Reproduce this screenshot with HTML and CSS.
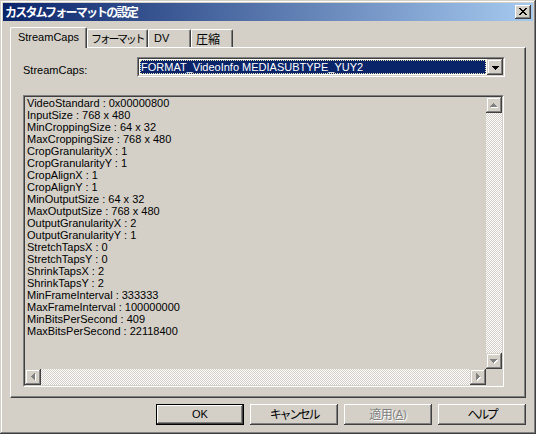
FILE: index.html
```html
<!DOCTYPE html>
<html lang="ja">
<head>
<meta charset="utf-8">
<title>カスタムフォーマットの設定</title>
<link rel="stylesheet" href="styles.css">
</head>
<body>
<div class="window">
  <div class="titlebar">
    <span class="title">カスタムフォーマットの設定</span>
    <div class="close">
      <svg width="8" height="7" viewBox="0 0 8 7" shape-rendering="crispEdges">
        <rect x="0" y="0" width="2" height="1"/><rect x="6" y="0" width="2" height="1"/>
        <rect x="1" y="1" width="2" height="1"/><rect x="5" y="1" width="2" height="1"/>
        <rect x="2" y="2" width="4" height="1"/>
        <rect x="3" y="3" width="2" height="1"/>
        <rect x="2" y="4" width="4" height="1"/>
        <rect x="1" y="5" width="2" height="1"/><rect x="5" y="5" width="2" height="1"/>
        <rect x="0" y="6" width="2" height="1"/><rect x="6" y="6" width="2" height="1"/>
      </svg>
    </div>
  </div>
  <div class="content">
    <div class="tabs">
      <div class="tab active">StreamCaps</div>
      <div class="tab tab-format">フォーマット</div>
      <div class="tab tab-dv">DV</div>
      <div class="tab tab-comp kanji">圧縮</div>
    </div>
    <div class="panel">
      <div class="row">
        <span class="label">StreamCaps:</span>
        <div class="combo">
          <div class="combo-inner">
            <div class="combo-value"><span class="combo-sel">FORMAT_VideoInfo MEDIASUBTYPE_YUY2</span></div>
            <div class="sbtn combo-btn">
              <svg width="7" height="4" viewBox="0 0 7 4" shape-rendering="crispEdges">
                <rect x="0" y="0" width="7" height="1"/><rect x="1" y="1" width="5" height="1"/>
                <rect x="2" y="2" width="3" height="1"/><rect x="3" y="3" width="1" height="1"/>
              </svg>
            </div>
          </div>
        </div>
      </div>
      <div class="listbox">
        <div class="listbox-inner">
          <div class="list-text">VideoStandard : 0x00000800
InputSize : 768 x 480
MinCroppingSize : 64 x 32
MaxCroppingSize : 768 x 480
CropGranularityX : 1
CropGranularityY : 1
CropAlignX : 1
CropAlignY : 1
MinOutputSize : 64 x 32
MaxOutputSize : 768 x 480
OutputGranularityX : 2
OutputGranularityY : 1
StretchTapsX : 0
StretchTapsY : 0
ShrinkTapsX : 2
ShrinkTapsY : 2
MinFrameInterval : 333333
MaxFrameInterval : 100000000
MinBitsPerSecond : 409
MaxBitsPerSecond : 22118400</div>
          <div class="vscroll">
            <div class="sbtn">
              <svg width="8" height="5" viewBox="0 0 8 5" shape-rendering="crispEdges">
                <g fill="#fff"><rect x="4" y="1" width="1" height="1"/><rect x="3" y="2" width="3" height="1"/><rect x="2" y="3" width="5" height="1"/><rect x="1" y="4" width="7" height="1"/></g>
                <g fill="#808080"><rect x="3" y="0" width="1" height="1"/><rect x="2" y="1" width="3" height="1"/><rect x="1" y="2" width="5" height="1"/><rect x="0" y="3" width="7" height="1"/></g>
              </svg>
            </div>
            <div class="track"></div>
            <div class="sbtn">
              <svg width="8" height="5" viewBox="0 0 8 5" shape-rendering="crispEdges">
                <g fill="#fff"><rect x="1" y="1" width="7" height="1"/><rect x="2" y="2" width="5" height="1"/><rect x="3" y="3" width="3" height="1"/><rect x="4" y="4" width="1" height="1"/></g>
                <g fill="#808080"><rect x="0" y="0" width="7" height="1"/><rect x="1" y="1" width="5" height="1"/><rect x="2" y="2" width="3" height="1"/><rect x="3" y="3" width="1" height="1"/></g>
              </svg>
            </div>
          </div>
          <div class="hscroll">
            <div class="sbtn">
              <svg width="5" height="8" viewBox="0 0 5 8" shape-rendering="crispEdges">
                <g fill="#fff"><rect x="1" y="4" width="1" height="1"/><rect x="2" y="3" width="1" height="3"/><rect x="3" y="2" width="1" height="5"/><rect x="4" y="1" width="1" height="7"/></g>
                <g fill="#808080"><rect x="0" y="3" width="1" height="1"/><rect x="1" y="2" width="1" height="3"/><rect x="2" y="1" width="1" height="5"/><rect x="3" y="0" width="1" height="7"/></g>
              </svg>
            </div>
            <div class="track"></div>
            <div class="sbtn">
              <svg width="5" height="8" viewBox="0 0 5 8" shape-rendering="crispEdges">
                <g fill="#fff"><rect x="1" y="1" width="1" height="7"/><rect x="2" y="2" width="1" height="5"/><rect x="3" y="3" width="1" height="3"/><rect x="4" y="4" width="1" height="1"/></g>
                <g fill="#808080"><rect x="0" y="0" width="1" height="7"/><rect x="1" y="1" width="1" height="5"/><rect x="2" y="2" width="1" height="3"/><rect x="3" y="3" width="1" height="1"/></g>
              </svg>
            </div>
          </div>
          <div class="corner"></div>
        </div>
      </div>
    </div>
    <div class="buttons">
      <div class="btn default">OK</div>
      <div class="btn jp">キャンセル</div>
      <div class="btn disabled"><span class="kanji">適用</span>(<u>A</u>)</div>
      <div class="btn jp">ヘルプ</div>
    </div>
  </div>
</div>
</body>
</html>
```

FILE: styles.css
```css
html, body {
  margin: 0;
  padding: 0;
  background: #d4d0c8;
}

body {
  font-family: "Liberation Sans", "Noto Sans CJK JP", sans-serif;
  font-size: 11px;
  color: #000;
}

.window {
  width: 536px;
  height: 434px;
  box-sizing: border-box;
  padding: 3px;
  background: #d4d0c8;
  box-shadow: inset -1px -1px #404040, inset 1px 1px #d4d0c8,
              inset -2px -2px #808080, inset 2px 2px #ffffff;
  display: flex;
  flex-direction: column;
}

/* title bar */
.titlebar {
  height: 18px;
  flex: none;
  background: linear-gradient(to right, #0a246a, #a6caf0);
  display: flex;
  align-items: center;
  justify-content: space-between;
  padding: 0 2px 0 2px;
}

.title {
  color: #fff;
  font-family: "Noto Sans CJK JP", sans-serif;
  font-weight: bold;
  font-size: 12px;
  letter-spacing: -1.8px;
  line-height: 18px;
}

.close {
  width: 16px;
  height: 14px;
  box-sizing: border-box;
  background: #d4d0c8;
  box-shadow: inset -1px -1px #404040, inset 1px 1px #ffffff,
              inset -2px -2px #808080, inset 2px 2px #d4d0c8;
  display: flex;
  align-items: flex-start;
  justify-content: flex-start;
  padding: 3px 0 0 4px;
}

.close svg {
  display: block;
  fill: #000;
}

/* content */
.content {
  padding: 6px 7px 0 7px;
  display: flex;
  flex-direction: column;
}

.tabs {
  display: flex;
  align-items: flex-end;
  height: 21px;
  margin-bottom: -1px;
  position: relative;
  z-index: 1;
}

.tab {
  box-sizing: border-box;
  height: 18px;
  margin-bottom: 1px;
  border-top: 1px solid #fff;
  border-left: 1px solid #fff;
  border-right: 1px solid #404040;
  border-radius: 2px 2px 0 0;
  box-shadow: inset -1px 0 #808080;
  background: #d4d0c8;
  text-align: center;
  line-height: 16px;
  white-space: nowrap;
  overflow: hidden;
}

.tab.active {
  width: 77px;
  height: 21px;
  margin-bottom: 0;
  line-height: 18px;
}

.tab-format {
  width: 61px;
  font-family: "Noto Sans CJK JP", sans-serif;
  font-size: 11px;
  letter-spacing: -2.3px;
  text-align: left;
  padding-left: 3px;
  line-height: 17px;
}

.tab-dv { width: 43px; text-align: left; padding-left: 5px; }
.tab-comp { width: 42px; text-align: left; padding-left: 4px; line-height: 17px; }

.jp {
  font-family: "Noto Sans CJK JP", sans-serif;
  font-size: 12px;
  letter-spacing: -2.3px;
}

.kanji {
  font-family: "Noto Sans CJK JP", sans-serif;
  font-size: 12px;
  letter-spacing: 0;
}

.panel {
  height: 351px;
  box-sizing: border-box;
  border-top: 1px solid #fff;
  border-left: 1px solid #fff;
  border-right: 1px solid #404040;
  border-bottom: 1px solid #404040;
  box-shadow: inset -1px -1px #808080;
  padding: 9px 0 0 12px;
}

.row {
  display: flex;
  align-items: center;
  height: 20px;
}

.label {
  width: 114px;
  flex: none;
  padding-top: 5px;
}

/* combo */
.combo {
  width: 368px;
  height: 20px;
  box-sizing: border-box;
  border: 1px solid;
  border-color: #808080 #fff #fff #808080;
}

.combo-inner {
  height: 100%;
  box-sizing: border-box;
  border: 1px solid;
  border-color: #404040 #d4d0c8 #d4d0c8 #404040;
  background: #fff;
  display: flex;
}

.combo-value {
  flex: 1;
  padding: 1px;
  display: flex;
}

.combo-sel {
  flex: 1;
  background: #0a246a;
  color: #fff;
  line-height: 14px;
  padding-left: 1px;
  outline: 1px dotted #f0e9b4;
  outline-offset: -1px;
  white-space: nowrap;
  overflow: hidden;
}

.sbtn {
  width: 16px;
  height: 16px;
  flex: none;
  box-sizing: border-box;
  background: #d4d0c8;
  box-shadow: inset -1px -1px #404040, inset 1px 1px #d4d0c8,
              inset -2px -2px #808080, inset 2px 2px #ffffff;
  display: flex;
  align-items: center;
  justify-content: center;
}

.sbtn svg { display: block; }

.combo-btn svg { fill: #000; margin-top: 1px; }

/* listbox */
.listbox {
  margin-top: 18px;
  width: 481px;
  height: 292px;
  box-sizing: border-box;
  border: 1px solid;
  border-color: #808080 #fff #fff #808080;
}

.listbox-inner {
  height: 100%;
  box-sizing: border-box;
  border: 1px solid;
  border-color: #404040 #d4d0c8 #d4d0c8 #404040;
  display: grid;
  grid-template-columns: 1fr 16px;
  grid-template-rows: 1fr 16px;
  background: #d4d0c8;
}

.list-text {
  white-space: pre;
  line-height: 12px;
  padding: 0 0 0 2px;
  overflow: hidden;
}

.vscroll {
  display: flex;
  flex-direction: column;
}

.hscroll {
  display: flex;
}

.track {
  flex: 1;
  background: repeating-conic-gradient(#ffffff 0 25%, #d4d0c8 0 50%) 0 0 / 2px 2px;
}

.corner { background: #d4d0c8; }

/* buttons */
.buttons {
  display: flex;
  justify-content: flex-end;
  gap: 6px;
  margin-top: 6px;
}

.btn {
  width: 88px;
  height: 21px;
  box-sizing: border-box;
  background: #d4d0c8;
  box-shadow: inset -1px -1px #404040, inset 1px 1px #ffffff,
              inset -2px -2px #808080, inset 2px 2px #d4d0c8;
  display: flex;
  align-items: center;
  justify-content: center;
  line-height: 14px;
  padding-bottom: 1px;
}

.btn.default {
  border: 1px solid #000;
}

.btn.disabled {
  color: #808080;
  text-shadow: 1px 1px #ffffff;
}

.btn.disabled .kanji {
  letter-spacing: -0.5px;
}
```
